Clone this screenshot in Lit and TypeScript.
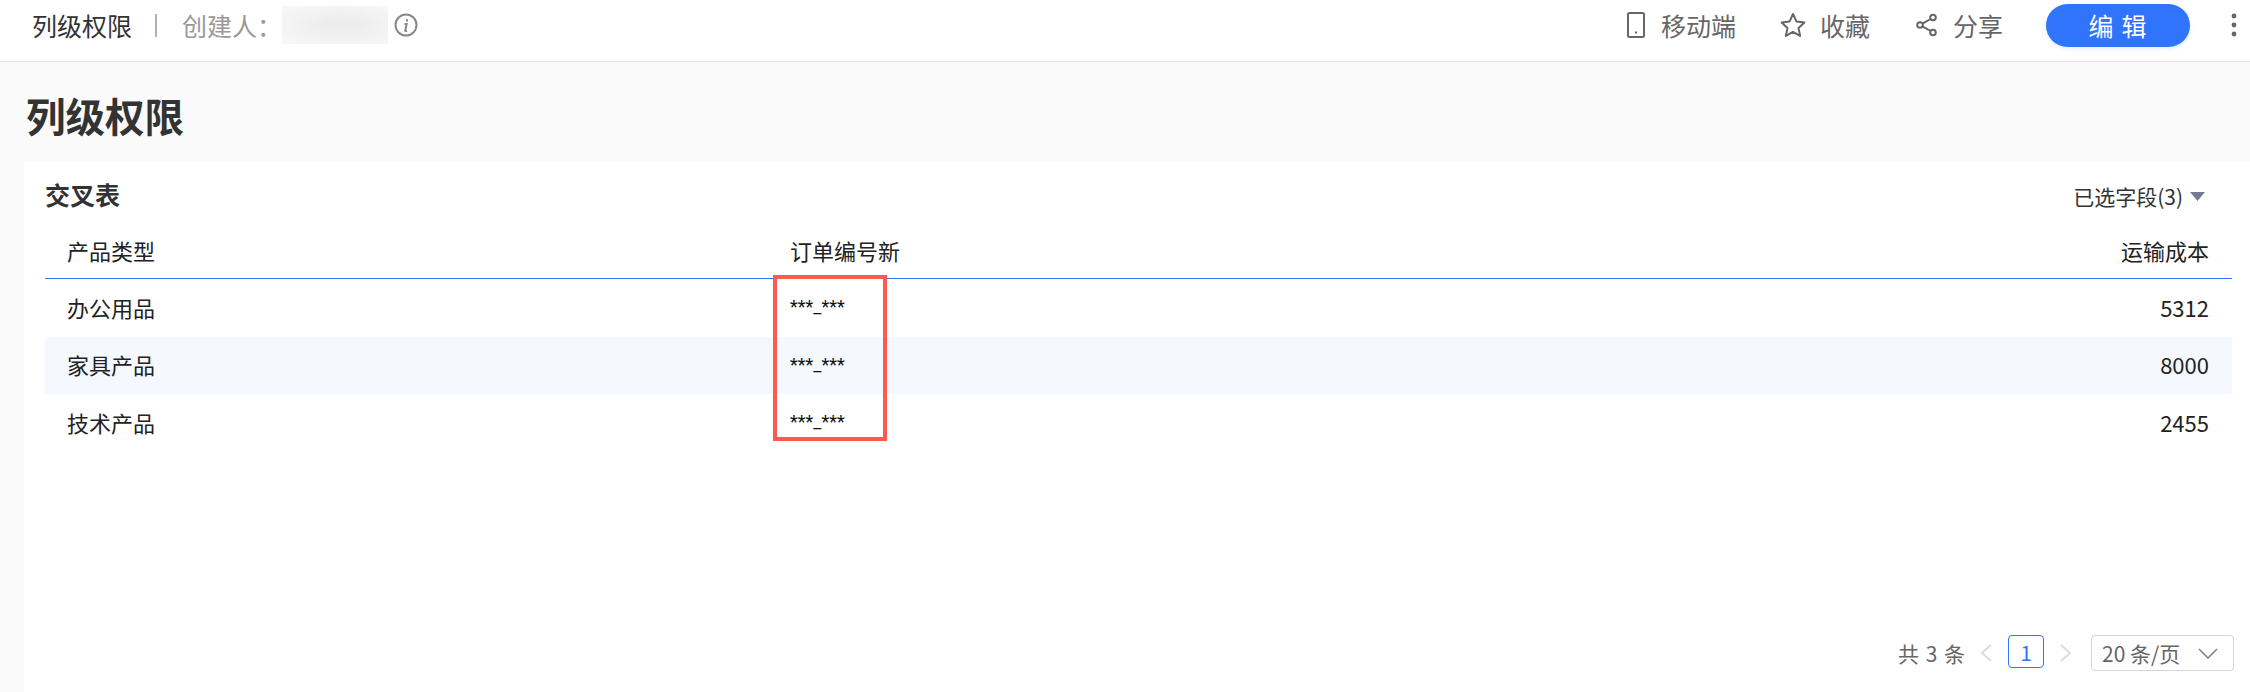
import { LitElement, html, css, svg } from "lit";
import { customElement } from "lit/decorators.js";

const rows = [
  ["办公用品", "5312"],
  ["家具产品", "8000"],
  ["技术产品", "2455"],
];

@customElement("app-root")
export class AppRoot extends LitElement {
  static styles = css`
    :host {
      display: block;
      width: 2250px;
      height: 692px;
      overflow: hidden;
      background: #fafafa;
      font-family: "Noto Sans CJK SC", "Noto Sans", sans-serif;
      color: #333;
    }
    .top {
      height: 50px;
      padding: 0 13px 11px 32px;
      background: #fff;
      border-bottom: 1px solid #e1e1e1;
      display: flex;
      align-items: center;
      font-size: 25px;
    }
    .crumb { color: #333; width: 100px; white-space: nowrap; }
    .sep { width: 2px; height: 23px; background: #b0b0b0; margin-left: 23px; margin-right: 25px; }
    .creator { color: #999; width: 84px; white-space: nowrap; }
    .blur {
      width: 106px; height: 38px; margin-left: 16px; margin-right: 6px;
      background: radial-gradient(ellipse at 55% 50%, #ececec 10%, #f7f7f7 90%);
    }
    .grow { flex: 1; }
    .act { display: flex; align-items: center; color: #666; white-space: nowrap; }
    .act svg { display: block; }
    .a1 { gap: 16px; margin-right: 44px; }
    .a2 { gap: 14px; margin-right: 46px; }
    .a3 { gap: 16px; margin-right: 42.5px; }
    .btn {
      width: 144px; height: 43px; border-radius: 22px;
      background: #2f74fb; color: #fff;
      display: flex; align-items: center; justify-content: center;
      letter-spacing: 8px; text-indent: 8px;
      box-shadow: 0 2px 4px rgba(47, 116, 251, 0.12);
      margin-right: 41.5px;
      font-size: 25px;
    }
    .title { height: 99px; box-sizing: border-box; padding: 28px 0 0 26px; font-size: 39.5px; line-height: 50px; font-weight: 700; color: #333; }
    .card { margin-left: 24px; height: 531px; background: #fff; position: relative; padding: 0 18px 0 21px; box-sizing: border-box; display: flex; flex-direction: column; }
    .card-head { height: 72px; box-sizing: border-box; padding: 0 27px 2px 0; display: flex; align-items: center; justify-content: space-between; flex: none; }
    .card-title { font-size: 25px; font-weight: 700; color: #333; margin-bottom: 5px; }
    .fields { display: flex; align-items: center; gap: 7px; font-size: 21px; color: #333; }
    .tri { width: 15px; height: 9px; }
    .row { display: flex; align-items: center; font-size: 22px; color: #222; padding: 0 23px 0 22px; }
    .row > :first-child { width: 723px; flex: none; }
    .row > :nth-child(2) { flex: 1; }
    .head { height: 33px; padding-bottom: 12px; border-bottom: 1.5px solid #2f74fb; flex: none; }
    .body-row { height: 57.5px; box-sizing: border-box; padding-bottom: 2px; flex: none; }
    .body-row:nth-child(even) { background: #f5f8fe; }
    .mask { font-family: Roboto, sans-serif; font-size: 18px; color: #111; }
    .redbox { position: absolute; left: 749px; top: 114px; width: 114px; height: 166px; border: 4px solid #ff5a4f; box-sizing: border-box; }
    .pager { margin-top: auto; margin-right: -2px; margin-bottom: 21px; display: flex; align-items: center; justify-content: flex-end; font-size: 21px; color: #666; }
    .total { margin-right: 15px; word-spacing: 2px; }
    .cur { width: 36px; height: 33px; box-sizing: border-box; border: 1px solid #2f74fb; border-radius: 4px; color: #2f74fb; display: flex; align-items: center; justify-content: center; margin: 0 16px; align-self: flex-start; }
    .size { width: 143px; height: 36px; box-sizing: border-box; border: 1px solid #d3d5da; border-radius: 4px; display: flex; align-items: center; justify-content: space-between; padding: 0 15px 0 10px; margin-left: 19px; white-space: nowrap; }
  `;

  private icon(w: number, h: number, body: unknown) {
    return html`<svg width=${w} height=${h} viewBox="0 0 ${w} ${h}" fill="none" stroke="#666" stroke-width="2">${body}</svg>`;
  }

  render() {
    return html`
      <div class="top">
        <div class="crumb">列级权限</div>
        <div class="sep"></div>
        <div class="creator">创建人：</div>
        <div class="blur"></div>
        ${this.icon(24, 24, svg`<circle cx="12" cy="12" r="10.5" stroke="#888"/><path d="M13 6.3v2.2M10.5 11h2.2l-1.5 6.5q0 .8 1.8.3" stroke="#888"/>`)}
        <div class="grow"></div>
        <div class="act a1">
          ${this.icon(18, 26, svg`<rect x="1" y="1" width="16" height="24" rx="1.5"/><path d="M8 20.5h2"/>`)}<span>移动端</span>
        </div>
        <div class="act a2">
          ${this.icon(26, 26, svg`<path d="M13 2l3.4 7.4 8 1-5.9 5.5 1.6 8-7.1-4-7.1 4 1.6-8-5.9-5.5 8-1z" stroke-linejoin="round"/>`)}<span>收藏</span>
        </div>
        <div class="act a3">
          ${this.icon(21, 24, svg`<circle cx="17" cy="4.5" r="2.8"/><circle cx="4" cy="12" r="2.8"/><circle cx="17" cy="19.5" r="2.8"/><path d="M14.6 6L6.4 10.6M6.4 13.4l8.2 4.6"/>`)}<span>分享</span>
        </div>
        <div class="btn">编辑</div>
        ${this.icon(6, 26, svg`<circle cx="3" cy="4" r="2.4" fill="#666" stroke="none"/><circle cx="3" cy="13" r="2.4" fill="#666" stroke="none"/><circle cx="3" cy="22" r="2.4" fill="#666" stroke="none"/>`)}
      </div>
      <div class="title">列级权限</div>
      <div class="card">
        <div class="card-head">
          <div class="card-title">交叉表</div>
          <div class="fields">已选字段(3)
            <svg class="tri" viewBox="0 0 15 9"><path d="M0 0h15L7.5 9z" fill="#757b8c"/></svg>
          </div>
        </div>
        <div class="row head"><span>产品类型</span><span>订单编号新</span><span>运输成本</span></div>
        <div>
          ${rows.map(([n, v]) => html`
            <div class="row body-row"><span>${n}</span><span class="mask">***_***</span><span>${v}</span></div>
          `)}
        </div>
        <div class="redbox"></div>
        <div class="pager">
          <span class="total">共 3 条</span>
          ${this.icon(12, 18, svg`<path d="M11 1L2 9l9 8" stroke="#ddd"/>`)}
          <span class="cur">1</span>
          ${this.icon(12, 18, svg`<path d="M1 1l9 8-9 8" stroke="#ddd"/>`)}
          <div class="size">20 条/页
            ${this.icon(20, 11, svg`<path d="M1 1l9 9 9-9" stroke="#7a8090" stroke-width="1.5"/>`)}
          </div>
        </div>
      </div>
    `;
  }
}
